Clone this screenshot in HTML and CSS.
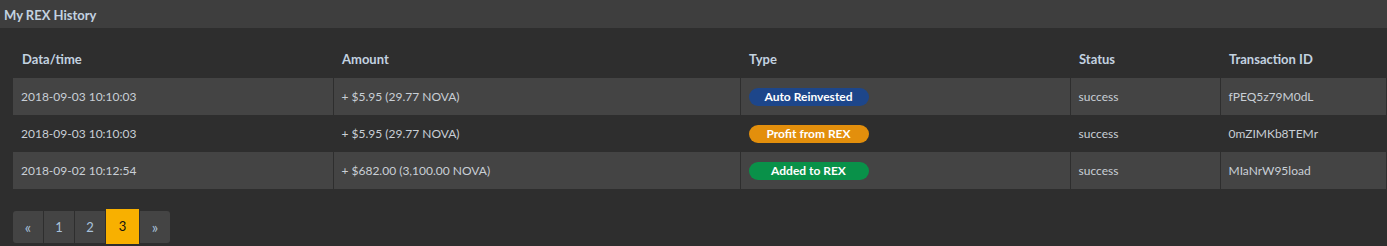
FILE: index.html
```html
<html>
<head>
    <title>My REX History</title>
    <link rel="stylesheet" href="styles.css">
</head>
<body>
<div class="panel">
    <div class="panel-title">My REX History</div>
    <div class="panel-body">
        <table class="history">
            <thead>
                <tr>
                    <th class="col-date">Data/time</th>
                    <th class="col-amount">Amount</th>
                    <th class="col-type">Type</th>
                    <th class="col-status">Status</th>
                    <th class="col-tx">Transaction ID</th>
                </tr>
            </thead>
            <tbody>
                <tr>
                    <td>2018-09-03 10:10:03</td>
                    <td>+ $5.95 (29.77 NOVA)</td>
                    <td><span class="badge badge-blue">Auto Reinvested</span></td>
                    <td>success</td>
                    <td>fPEQ5z79M0dL</td>
                </tr>
                <tr>
                    <td>2018-09-03 10:10:03</td>
                    <td>+ $5.95 (29.77 NOVA)</td>
                    <td><span class="badge badge-orange">Profit from REX</span></td>
                    <td>success</td>
                    <td>0mZIMKb8TEMr</td>
                </tr>
                <tr>
                    <td>2018-09-02 10:12:54</td>
                    <td>+ $682.00 (3,100.00 NOVA)</td>
                    <td><span class="badge badge-green">Added to REX</span></td>
                    <td>success</td>
                    <td>MIaNrW95load</td>
                </tr>
            </tbody>
        </table>

        <ul class="pagination">
            <li class="page page-arrow">&laquo;</li>
            <li class="page">1</li>
            <li class="page">2</li>
            <li class="page active">3</li>
            <li class="page page-arrow">&raquo;</li>
        </ul>
    </div>
</div>
</body>
</html>
```

FILE: styles.css
```css
body {
    margin: 0;
    background-color: #2e2e2e;
    font-family: "Lato", "Open Sans", sans-serif;
    font-size: 12px;
    color: #c9cfd6;
}

.panel-title {
    height: 28px;
    line-height: 30px;
    padding-left: 4px;
    background-color: #3e3e3e;
    color: #c3d2e0;
    font-weight: bold;
    font-size: 13px;
}

.panel-body {
    padding: 12px 1px 0 13px;
}

.history {
    width: 100%;
    border-collapse: collapse;
    table-layout: fixed;
    font-size: 12px;
}

.history th {
    height: 38px;
    text-align: left;
    padding: 0 9px;
    color: #c3d2e0;
    font-weight: bold;
    font-size: 13px;
    white-space: nowrap;
}

/* widths are content widths, 18px padding comes on top */
.col-date { width: 302px; }
.col-amount { width: 389px; }
.col-type { width: 312px; }
.col-status { width: 132px; }

.history td {
    height: 37px;
    padding: 0 8px;
    border-left: 1px solid #2e2e2e;
    white-space: nowrap;
    font-size: 12px;
}

.history td:first-child {
    border-left: none;
}

.history tbody tr:nth-child(odd) td {
    background-color: #444444;
}

.badge {
    display: inline-block;
    width: 120px;
    height: 18px;
    line-height: 18px;
    border-radius: 9px;
    text-align: center;
    color: #ffffff;
    font-weight: bold;
    font-size: 12px;
}

.badge-blue { background-color: #1d468a; }
.badge-orange { background-color: #e38f0c; }
.badge-green { background-color: #099149; }

.pagination {
    display: flex;
    align-items: center;
    list-style: none;
    margin: 20px 0 0 0;
    padding: 0;
}

.page {
    width: 30px;
    height: 32px;
    line-height: 32px;
    text-align: center;
    background-color: #444444;
    color: #a9c2dc;
    margin-right: 1px;
    font-size: 13px;
}

.page-arrow {
    font-size: 15px;
}

.page:first-child {
    border-radius: 3px 0 0 3px;
}

.page:last-child {
    border-radius: 0 3px 3px 0;
}

.active {
    width: 33px;
    height: 35px;
    line-height: 35px;
    background-color: #f8b000;
    color: #111111;
}
```
